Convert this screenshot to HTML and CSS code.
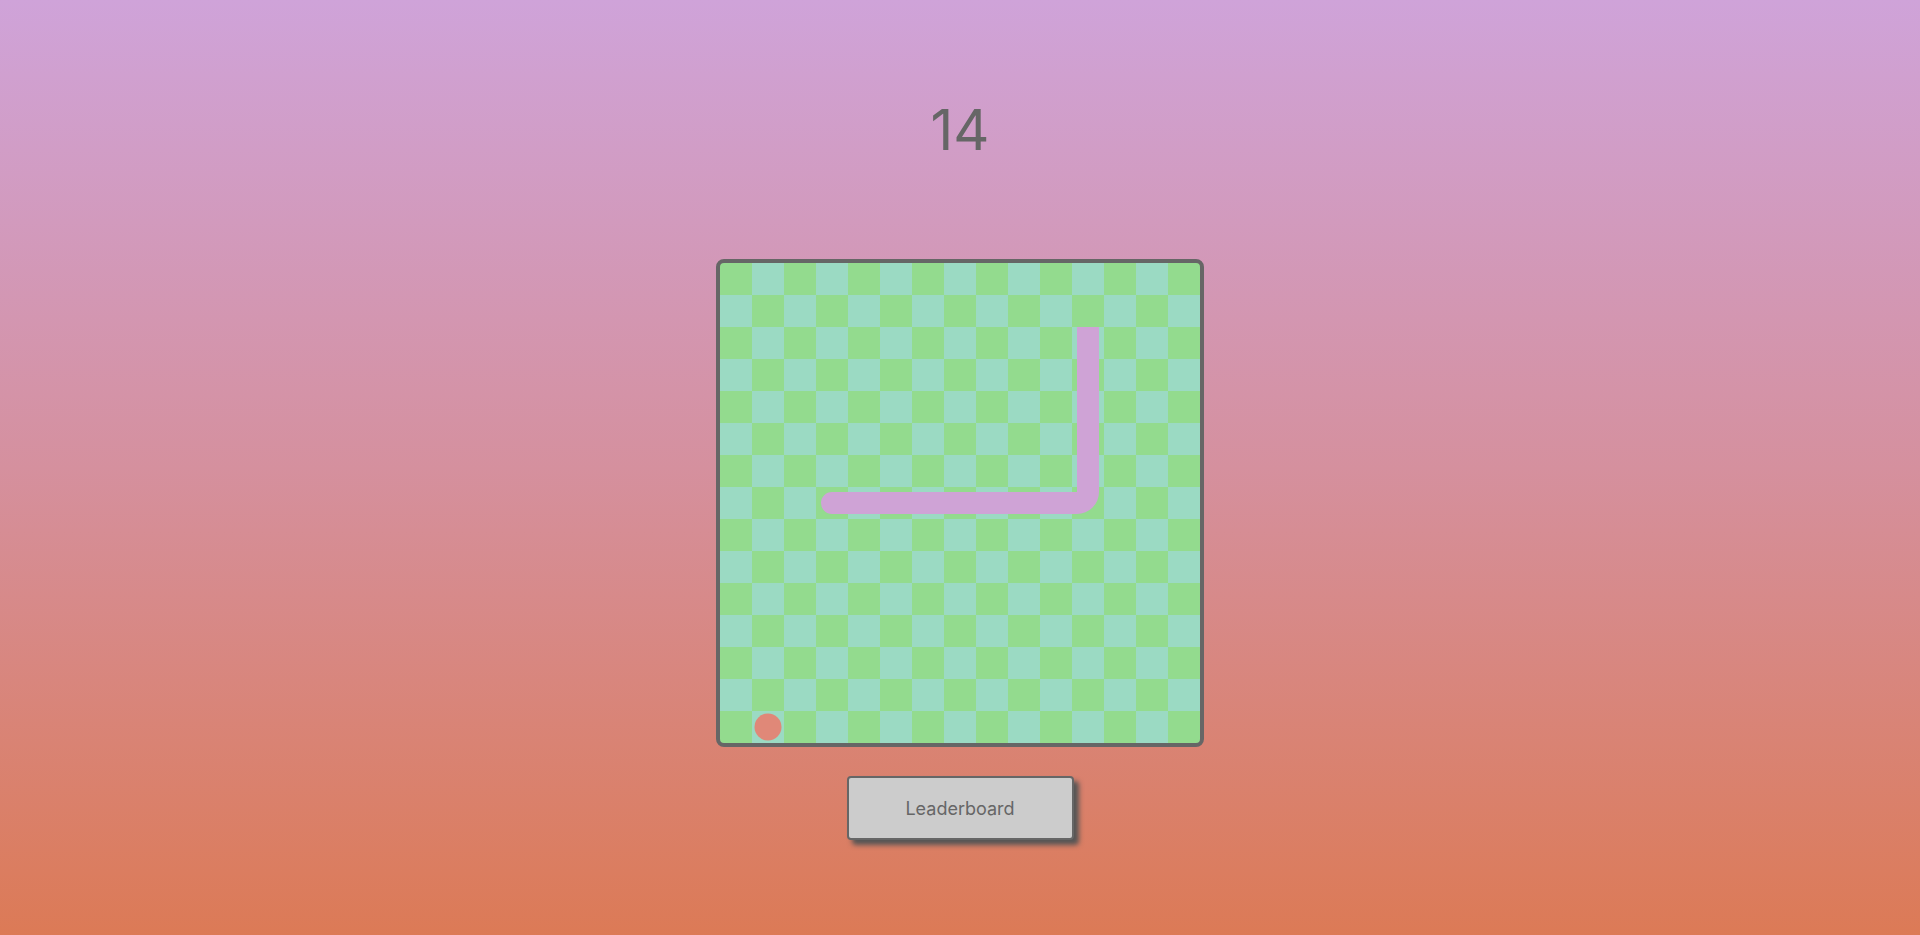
FILE: index.html
```html
<!DOCTYPE html>
<html lang="en">
<head>
<meta charset="utf-8">
<title>Snake</title>
<link rel="stylesheet" href="styles.css">
</head>
<body>
<main class="game">
  <div class="score">14</div>
  <div class="board">
    <svg class="layer" width="480" height="480" viewBox="0 0 480 480">
      <path class="snake" d="M357 64 H379 V229 A22 22 0 0 1 357 251 H112 A11 11 0 0 1 112 229 H357 Z"/>
      <circle class="apple" cx="48" cy="464" r="13.5"/>
    </svg>
  </div>
  <button class="btn" type="button">Leaderboard</button>
</main>
</body>
</html>
```
FILE: styles.css
```css
html, body {
  margin: 0;
  height: 100%;
}
body {
  background: linear-gradient(to bottom, #cfa3d9 0%, #d5909e 50%, #dc7a56 100%);
  font-family: Inter, "Noto Sans", sans-serif;
  overflow: hidden;
}
.game {
  display: flex;
  flex-direction: column;
  align-items: center;
  padding-top: 102px;
}
.score {
  font-size: 56px;
  line-height: 56px;
  height: 56px;
  color: #666;
  font-weight: 400;
}
.board {
  position: relative;
  margin-top: 101px;
  width: 480px;
  height: 480px;
  border: 4px solid #666;
  border-radius: 8px;
  overflow: hidden;
  background-color: #93db8e;
  background-image: conic-gradient(#9bdac3 0 25%, #93db8e 0 50%, #9bdac3 0 75%, #93db8e 0);
  background-size: 64px 64px;
}
.layer {
  position: absolute;
  left: 0;
  top: 0;
  display: block;
}
.snake {
  fill: #cfa3d6;
}
.apple {
  fill: #e08878;
}
.btn {
  margin-top: 29px;
  width: 227px;
  height: 64px;
  background: #cccccc;
  border: 2px solid #666;
  border-radius: 4px;
  box-shadow: 5px 5px 5px #555;
  color: #666;
  font-family: Inter, "Noto Sans", sans-serif;
  font-size: 18px;
  cursor: pointer;
}
```
